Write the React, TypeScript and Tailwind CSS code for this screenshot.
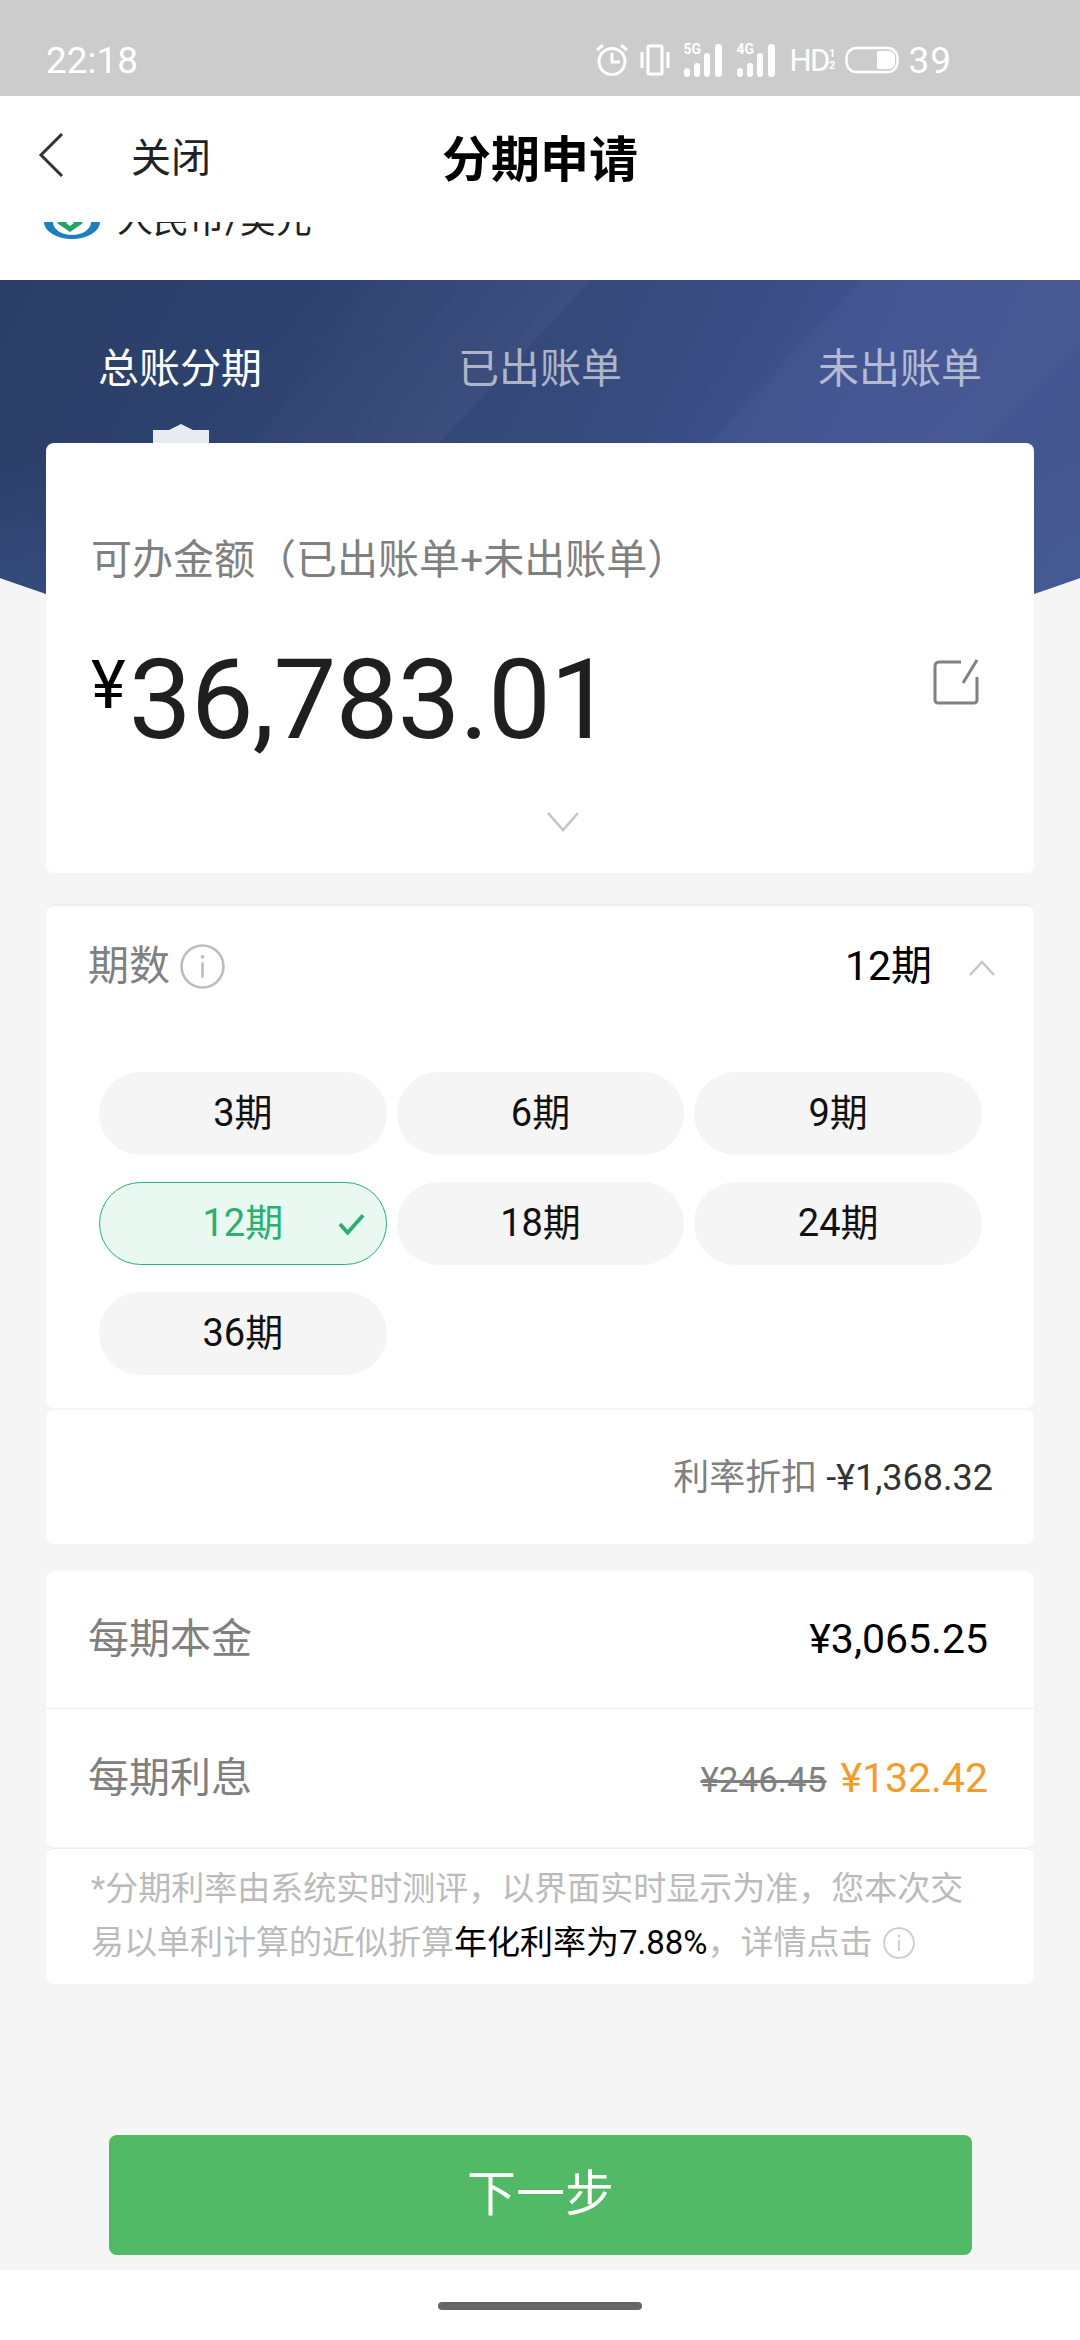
const terms = ["3期", "6期", "9期", "12期", "18期", "24期", "36期"];

function InfoIcon({ className }: { className: string }) {
  return (
    <svg viewBox="0 0 44 44" fill="none" stroke="currentColor" className={className}>
      <circle cx="22" cy="22" r="20.5" strokeWidth="2.5" />
      <circle cx="22" cy="12.5" r="1.8" fill="currentColor" stroke="none" />
      <path d="M22 18v15" strokeWidth="2.5" />
    </svg>
  );
}

function Signal({ label, className }: { label: string; className: string }) {
  return (
    <div className={`relative w-[40px] h-[34px] ${className}`}>
      <span className="absolute left-0 -top-[1px] text-[14px] leading-[14px] font-bold">{label}</span>
      <svg viewBox="0 0 40 34" fill="currentColor" className="w-[40px] h-[34px]">
        <rect x="1" y="25" width="6" height="9" rx="3" />
        <rect x="11" y="20" width="6" height="14" rx="3" />
        <rect x="21" y="10" width="6" height="24" rx="3" />
        <rect x="32" y="1" width="7" height="33" rx="3.5" />
      </svg>
    </div>
  );
}

function StatusIcons() {
  return (
    <div className="flex items-center text-white">
      <svg viewBox="0 0 34 34" fill="none" stroke="currentColor" strokeWidth="3" className="w-[34px] h-[34px]">
        <circle cx="17" cy="18.5" r="13" />
        <path d="M17 10v9h8" />
        <path d="M2 7l6-5M32 7l-6-5" />
      </svg>
      <svg viewBox="0 0 30 34" fill="none" stroke="currentColor" strokeWidth="3" className="w-[30px] h-[34px] ml-[11px]">
        <rect x="8" y="3" width="14" height="28" rx="1" />
        <path d="M2 9v16M28 9v16" />
      </svg>
      <Signal label="5G" className="ml-[13px]" />
      <Signal label="4G" className="ml-[13px]" />
      <div className="ml-[13px] flex items-center w-[44px] text-[31px] leading-none tracking-[-1.5px]">
        HD
        <span className="text-[11px] leading-[12px] w-[6px] font-bold">
          1<br />2
        </span>
      </div>
      <svg viewBox="0 0 54 30" fill="none" className="w-[54px] h-[30px] ml-[12px]">
        <rect x="1.5" y="3" width="51" height="24" rx="10" stroke="currentColor" strokeWidth="2.5" />
        <path d="M32 6h12a6 6 0 0 1 6 6v6a6 6 0 0 1-6 6H32z" fill="currentColor" />
      </svg>
      <span className="ml-[9px] text-[37px] leading-none tracking-[1px]">39</span>
    </div>
  );
}

function BankLogo() {
  return (
    <svg viewBox="0 0 56 56" className="w-[56px] h-[56px] shrink-0 mt-[24px]">
      <path d="M0 19a28 17 0 0 0 56 0z" fill="#1b7fc0" />
      <path d="M9 19a19 13 0 0 0 38 0z" fill="#fff" />
      <path d="M26 11l13 9-13 9-13-9z" fill="#1fa463" />
      <path d="M26 17l4 3-4 3-4-3z" fill="#fff" />
    </svg>
  );
}

export default function App() {
  return (
    <div
      className="w-[1080px] h-[2340px] overflow-hidden flex flex-col bg-[#f5f5f5] text-[#808080]"
      style={{ fontFamily: 'Roboto, "Noto Sans CJK SC", sans-serif' }}
    >
      <div className="h-[96px] bg-[#cccccc] flex items-center justify-between pl-[46px] pr-[128px] pt-[24px] shrink-0">
        <span className="text-white text-[37px] leading-none">22:18</span>
        <StatusIcons />
      </div>

      <div className="h-[126px] bg-white flex items-center relative shrink-0 pb-[3px] pl-[38px]">
        <svg viewBox="0 0 26 44" fill="none" stroke="#333" strokeWidth="3" className="w-[26px] h-[44px] -mt-[6px]">
          <path d="M24 1L3 22l21 21" />
        </svg>
        <span className="ml-[67px] text-[40px] leading-none text-[#222] mt-[2px]">关闭</span>
        <h1 className="absolute left-0 right-0 top-[37px] text-center text-[49px] leading-[56px] font-bold text-black">
          分期申请
        </h1>
      </div>

      <div className="h-[58px] bg-white overflow-hidden shrink-0">
        <div className="flex items-center pl-[44px] -mt-[31px] h-[56px]">
          <BankLogo />
          <span className="ml-[17px] text-[36px] leading-none text-[#222] mt-[4px]">人民币/美元</span>
        </div>
      </div>

      <div className="h-[394px] shrink-0 bg-[linear-gradient(133deg,transparent_22%,rgba(255,255,255,0.04)_40.7%,transparent_41%,transparent_48%,rgba(255,255,255,0.005)_59%,rgba(255,255,255,0.03)_60%,rgba(255,255,255,0.035)_78%,rgba(255,255,255,0.01)_79%),linear-gradient(to_top,rgba(66,92,150,0.6),transparent_55%),linear-gradient(115deg,#2a3e66_0%,#2e4270_25%,#364a7c_50%,#3e5190_72%,#44568f_100%)] [clip-path:circle(1565px_at_540px_-1171px)]">
        <div className="grid grid-cols-3 pt-[61px] text-[41px] leading-[56px] text-center">
          <span className="text-white">总账分期</span>
          <span className="text-white/60">已出账单</span>
          <span className="text-white/60">未出账单</span>
        </div>
        <svg viewBox="0 0 56 19" fill="#e8ebf0" className="w-[56px] h-[19px] ml-[153px] mt-[27px]">
          <path d="M0 6h16L28 0l12 6h16v13H0z" />
        </svg>
      </div>

      <div className="relative mx-[46px] -mt-[231px] h-[430px] bg-white rounded-[8px] pt-[89px] shrink-0">
        <p className="pl-[45px] text-[41px] leading-[56px] whitespace-nowrap">可办金额（已出账单+未出账单）</p>
        <div className="mt-[52px] h-[120px] flex items-center justify-between pl-[45px] pr-[55px]">
          <div className="flex items-start text-[#1f1f1f]">
            <span className="text-[66px] leading-none mt-[13px] text-black">¥</span>
            <span className="ml-[3px] text-[112px] leading-[120px] tracking-[-1px]">36,783.01</span>
          </div>
          <svg viewBox="0 0 46 46" fill="none" stroke="#808080" strokeWidth="3" className="w-[46px] h-[46px] -mt-[36px]">
            <path d="M28 3H6a4 4 0 0 0-4 4v34a3 3 0 0 0 3 3h36a3 3 0 0 0 3-3V18" />
            <path d="M44 1L30 24" />
          </svg>
        </div>
        <svg viewBox="0 0 32 20" fill="none" stroke="#c4c4c4" strokeWidth="2.5" className="w-[32px] h-[20px] ml-[501px] mt-[52px]">
          <path d="M1 1l15 17L31 1" />
        </svg>
      </div>

      <div className="mx-[46px] mt-[31px] h-[504px] bg-white rounded-[8px] border-t-2 border-[#eeeeee] shrink-0">
        <div className="h-[120px] flex items-center justify-between pl-[42px] pr-[39px]">
          <div className="flex items-center">
            <span className="text-[41px] leading-none">期数</span>
            <InfoIcon className="w-[45px] h-[45px] ml-[10px] text-[#bdbdbd]" />
          </div>
          <div className="flex items-center">
            <span className="text-[41px] leading-none text-black">12期</span>
            <svg viewBox="0 0 26 16" fill="none" stroke="#c4c4c4" strokeWidth="2.5" className="w-[26px] h-[16px] ml-[37px] mt-[3px]">
              <path d="M1 15L13 2l12 13" />
            </svg>
          </div>
        </div>
        <div className="ml-[53px] w-[883px] mt-[46px] grid grid-cols-3 gap-x-[10px] gap-y-[27px]">
          {terms.map((term) =>
            term === "12期" ? (
              <div
                key={term}
                className="relative h-[83px] rounded-full bg-[#e9f8f1] border border-[#2bb074] flex items-center justify-center text-[38px] text-[#27b06e]"
              >
                {term}
                <svg viewBox="0 0 28 22" fill="none" stroke="#27b06e" strokeWidth="4" className="absolute left-[238px] top-[30px] w-[27px] h-[22px]">
                  <path d="M2 11l8 9L26 2" />
                </svg>
              </div>
            ) : (
              <div key={term} className="h-[83px] rounded-full bg-[#f5f5f5] flex items-center justify-center text-[38px] text-[#111]">
                {term}
              </div>
            )
          )}
        </div>
      </div>

      <div className="mx-[46px] mt-[2px] h-[134px] bg-white rounded-[8px] flex items-center justify-end pr-[41px] shrink-0 pt-[2px]">
        <span className="text-[36px] leading-none">利率折扣</span>
        <span className="ml-[9px] text-[36px] leading-none text-[#333]">-¥1,368.32</span>
      </div>

      <div className="mx-[46px] mt-[27px] h-[276px] bg-white rounded-[8px] shrink-0 flex flex-col">
        <div className="h-[138px] flex items-center justify-between pl-[42px] pr-[46px] border-b border-[#eeeeee]">
          <span className="text-[41px] leading-none">每期本金</span>
          <span className="text-[41px] leading-none text-black">¥3,065.25</span>
        </div>
        <div className="h-[138px] flex items-center justify-between pl-[42px] pr-[46px]">
          <span className="text-[41px] leading-none">每期利息</span>
          <div className="flex items-center">
            <span className="text-[35px] leading-none line-through mt-[4px]">¥246.45</span>
            <span className="ml-[14px] text-[41px] leading-none text-[#f39c2c]">¥132.42</span>
          </div>
        </div>
      </div>

      <div className="mx-[46px] mt-[1px] h-[136px] bg-white rounded-[8px] border-t border-[#eeeeee] pl-[45px] pt-[13px] text-[33px] leading-[54px] text-[#bbbbbb] shrink-0">
        <p className="whitespace-nowrap">*分期利率由系统实时测评，以界面实时显示为准，您本次交</p>
        <p className="flex items-center whitespace-nowrap">
          易以单利计算的近似折算<span className="text-black">年化利率为7.88%</span>，详情点击
          <InfoIcon className="w-[32px] h-[32px] ml-[10px] text-[#cccccc]" />
        </p>
      </div>

      <div className="mx-[109px] mt-[151px] w-[863px] h-[120px] bg-[#52b966] rounded-[8px] flex items-center justify-center text-white text-[49px] shrink-0">
        下一步
      </div>

      <div className="mt-[15px] flex-1 bg-white pt-[32px]">
        <div className="w-[204px] h-[8px] mx-auto rounded-full bg-[#666666]" />
      </div>
    </div>
  );
}
